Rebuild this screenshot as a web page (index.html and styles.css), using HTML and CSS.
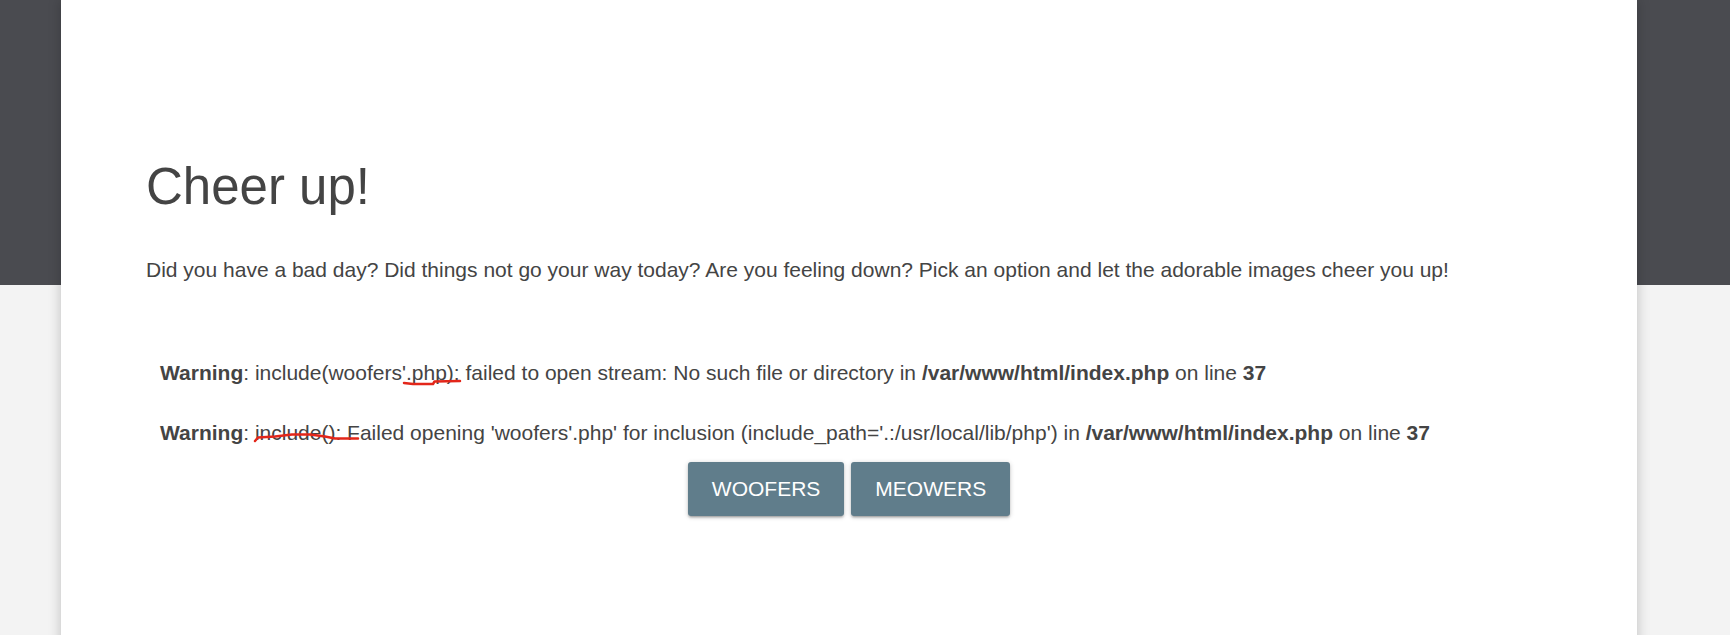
FILE: index.html
```html
<!DOCTYPE html>
<html lang="en">
<head>
<meta charset="utf-8">
<title>Cheer up!</title>
<link rel="stylesheet" href="styles.css">
</head>
<body>
<main class="card">
  <h1 class="title">Cheer up!</h1>
  <p class="lead">Did you have a bad day? Did things not go your way today? Are you feeling down? Pick an option and let the adorable images cheer you up!</p>
  <div class="warnings">
    <b>Warning</b>: include(woofers'.php): failed to open stream: No such file or directory in <b>/var/www/html/index.php</b> on line <b>37</b><br><br>
    <b>Warning</b>: include(): Failed opening 'woofers'.php' for inclusion (include_path='.:/usr/local/lib/php') in <b>/var/www/html/index.php</b> on line <b>37</b>
  </div>
  <div class="actions">
    <button class="btn" type="button">Woofers</button>
    <button class="btn" type="button">Meowers</button>
  </div>
  <svg class="marks" width="1576" height="635" viewBox="0 0 1576 635" aria-hidden="true">
    <path d="M343 383 L352 384 L372 384 L373.5 381.5 L399 381" />
    <path d="M194 441 L197 437.5 L214 436.5 L231 434.5 L249 434.5 L264 436.5 L274 438.5 L297 438.5" />
  </svg>
</main>
</body>
</html>
```
FILE: styles.css
```css
html, body {
  margin: 0;
  padding: 0;
}
body {
  min-height: 100vh;
  overflow: hidden;
  background: linear-gradient(#4a4b50 0, #4a4b50 285px, #f3f3f3 285px);
  font-family: "Liberation Sans", Arial, sans-serif;
  color: #444;
}
.card {
  position: relative;
  box-sizing: border-box;
  margin-left: 61px;
  width: 1576px;
  min-height: 700px;
  padding: 157px 85px 0 85px;
  background: #fff;
  box-shadow: 0 0 12px rgba(0, 0, 0, 0.22);
}
.title {
  margin: 0;
  font-size: 51px;
  font-weight: 400;
  line-height: 60px;
}
.lead {
  margin: 38px 0 0 0;
  font-size: 21px;
  line-height: 30px;
}
.warnings {
  margin-top: 73px;
  padding-left: 14px;
  font-size: 21px;
  line-height: 30px;
}
.actions {
  display: flex;
  justify-content: center;
  gap: 7px;
  margin-top: 14px;
}
.btn {
  height: 54px;
  padding: 0 24px;
  border: none;
  border-radius: 3px;
  background: #607d8b;
  color: #fff;
  font-family: "Liberation Sans", Arial, sans-serif;
  font-size: 21px;
  text-transform: uppercase;
  box-shadow: 0 2px 2px 0 rgba(0, 0, 0, 0.14), 0 3px 1px -2px rgba(0, 0, 0, 0.12), 0 1px 5px 0 rgba(0, 0, 0, 0.2);
}
.marks {
  position: absolute;
  top: 0;
  left: 0;
  pointer-events: none;
}
.marks path {
  fill: none;
  stroke: #e3261a;
  stroke-width: 2.5;
  stroke-linecap: round;
  stroke-linejoin: round;
}
```
